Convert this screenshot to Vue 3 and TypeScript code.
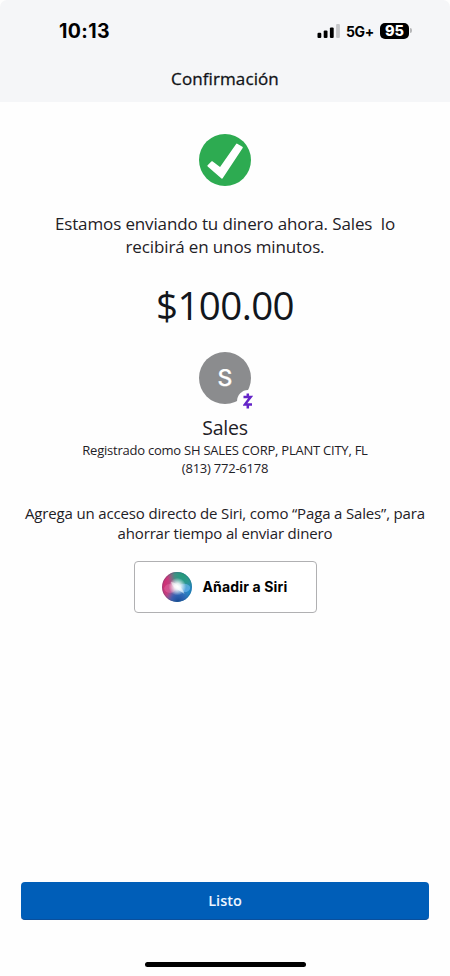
<script setup lang="ts">
interface Recipient {
  name: string
  initial: string
  registeredAs: string
  phone: string
}

const recipient: Recipient = {
  name: 'Sales',
  initial: 'S',
  registeredAs: 'Registrado como SH SALES CORP, PLANT CITY, FL',
  phone: '(813) 772-6178',
}
const amount = '$100.00'
const battery = 95
</script>

<template>
  <div class="screen">
    <header class="top">
      <div class="status">
        <span class="time">10:13</span>
        <div class="indicators">
          <svg class="signal" width="24" height="16" viewBox="0 0 24 16">
            <rect x="0.5" y="9.8" width="3.8" height="5.2" rx="1.1" />
            <rect x="6.7" y="7.4" width="3.8" height="7.6" rx="1.1" />
            <rect x="12.9" y="4.4" width="3.8" height="10.6" rx="1.1" />
            <rect x="19.1" y="1" width="3.8" height="14" rx="1.1" fill="#c6c7c9" />
          </svg>
          <span class="network">5G+</span>
          <span class="battery">{{ battery }}</span>
          <span class="battery-tip"></span>
        </div>
      </div>
      <h1 class="title">Confirmación</h1>
    </header>

    <main class="content">
      <svg class="check" width="52" height="52" viewBox="0 0 52 52">
        <circle cx="26" cy="26" r="26" fill="#2dab51" />
        <path d="M9.2 31.8 12.9 28 21.2 34.2 37.8 10.4 43 13.5 23 43.8Z" fill="#fff" stroke="#fff" stroke-width="1.6" stroke-linejoin="round" />
      </svg>

      <p class="message">
        <span class="line">Estamos enviando tu dinero ahora. Sales&nbsp; lo</span>
        <span class="line">recibirá en unos minutos.</span>
      </p>

      <div class="amount">{{ amount }}</div>

      <div class="avatar">
        <span class="initial">{{ recipient.initial }}</span>
        <span class="badge">
          <svg width="10" height="16" viewBox="0 0 10 16" fill="none" stroke="#6424c8" stroke-width="2.5">
            <path d="M.5 4H7.6L1.8 11.6H9" />
            <path d="M4.8 .4V4M4.8 11.8V15.6" />
          </svg>
        </span>
      </div>

      <div class="name">{{ recipient.name }}</div>
      <div class="detail">{{ recipient.registeredAs }}</div>
      <div class="detail">{{ recipient.phone }}</div>

      <p class="hint">
        <span class="line">Agrega un acceso directo de Siri, como “Paga a Sales”, para</span>
        <span class="line">ahorrar tiempo al enviar dinero</span>
      </p>

      <button class="siri" type="button">
        <svg width="30" height="30" viewBox="0 0 30 30">
          <defs>
            <linearGradient id="orb" x1="0" y1="0.4" x2="1" y2="0.6">
              <stop offset="0" stop-color="#d42a70" />
              <stop offset=".32" stop-color="#bd4888" />
              <stop offset=".58" stop-color="#4088c8" />
              <stop offset="1" stop-color="#1c85c4" />
            </linearGradient>
            <radialGradient id="green" cx=".7" cy=".08" r=".52">
              <stop offset="0" stop-color="#249a78" />
              <stop offset=".55" stop-color="#2a9d80" stop-opacity=".8" />
              <stop offset="1" stop-color="#2a9d80" stop-opacity="0" />
            </radialGradient>
            <radialGradient id="blue" cx=".54" cy=".98" r=".46">
              <stop offset="0" stop-color="#184a96" />
              <stop offset=".5" stop-color="#2c5cb0" stop-opacity=".8" />
              <stop offset="1" stop-color="#386bb0" stop-opacity="0" />
            </radialGradient>
            <radialGradient id="glow">
              <stop offset="0" stop-color="#fff" />
              <stop offset=".35" stop-color="#fff" stop-opacity=".85" />
              <stop offset="1" stop-color="#fff" stop-opacity="0" />
            </radialGradient>
          </defs>
          <circle cx="15" cy="15" r="15" fill="url(#orb)" />
          <circle cx="15" cy="15" r="15" fill="url(#green)" />
          <circle cx="15" cy="15" r="15" fill="url(#blue)" />
          <ellipse cx="22" cy="16" rx="6.2" ry="4.2" fill="#73bdf4" opacity=".6" />
          <ellipse cx="8" cy="16.5" rx="5.8" ry="4.4" fill="#e777ad" opacity=".4" />
          <circle cx="15.4" cy="14.6" r="8.8" fill="url(#glow)" />
          <path d="M9 10Q14 11 16 13.5Q21 16 22.5 22Q17 18 14 16.5Q10 14 9 10Z" fill="#fff" opacity=".5" />
          <circle cx="15" cy="15" r="14.5" fill="none" stroke="#2a647d" stroke-opacity=".3" />
        </svg>
        <span class="siri-label">Añadir a Siri</span>
      </button>
    </main>

    <footer class="bottom">
      <button class="done" type="button"><span>Listo</span></button>
      <div class="home"></div>
    </footer>
  </div>
</template>

<style>
body {
  background: #fff;
}
</style>

<style scoped>
.screen {
  display: flex;
  flex-direction: column;
  width: 450px;
  height: 976px;
  overflow: hidden;
  background: #fefefe;
  color: #1e2126;
  font-family: "Open Sans", sans-serif;
}
.top {
  height: 102px;
  flex: none;
  background: #f5f6f8;
  border-radius: 7px 7px 0 0;
}
.status {
  display: flex;
  justify-content: space-between;
  align-items: center;
  height: 61px;
  padding: 0 38px 0 59px;
  color: #000;
  font-family: Inter, sans-serif;
}
.time {
  padding-top: 1px;
  font-size: 19.5px;
  font-weight: 700;
  letter-spacing: .4px;
}
.indicators {
  display: flex;
  align-items: center;
}
.network {
  margin-left: 5px;
  padding-top: 1px;
  font-size: 14px;
  font-weight: 700;
  letter-spacing: -.3px;
}
.battery {
  width: 29px;
  height: 16px;
  margin-left: 6px;
  border-radius: 5px;
  background: #000;
  color: #fff;
  font-size: 14.5px;
  font-weight: 800;
  line-height: 16px;
  text-align: center;
}
.battery-tip {
  width: 2px;
  height: 5px;
  margin-left: 1px;
  border-radius: 0 2px 2px 0;
  background: #b5b6b8;
}
.title {
  margin: 0;
  height: 36px;
  color: #101216;
  font-size: 17px;
  font-weight: 500;
  line-height: 36px;
  text-align: center;
  letter-spacing: .1px;
  -webkit-text-stroke: .3px #101216;
}
.content {
  display: flex;
  flex: 1;
  flex-direction: column;
  align-items: center;
  padding-top: 32px;
  white-space: nowrap;
}
.check {
  flex: none;
}
.line {
  display: block;
}
.message {
  margin: 26px 0 0;
  font-size: 17px;
  line-height: 23px;
  text-align: center;
  letter-spacing: -.13px;
}
.amount {
  margin-top: 22px;
  height: 50px;
  color: #12161c;
  font-size: 38.5px;
  line-height: 50px;
  letter-spacing: -.6px;
}
.avatar {
  position: relative;
  display: flex;
  align-items: center;
  justify-content: center;
  flex: none;
  width: 52px;
  height: 52px;
  margin-top: 21.5px;
  border-radius: 50%;
  background: #8b8c8e;
}
.initial {
  color: #fff;
  font-family: Inter, sans-serif;
  font-size: 23px;
  font-weight: 500;
  -webkit-text-stroke: .2px #fff;
}
.badge {
  position: absolute;
  left: 38px;
  top: 38px;
  display: flex;
  align-items: center;
  justify-content: center;
  width: 22px;
  height: 23px;
  border-radius: 50%;
  background: #fefefe;
}
.name {
  margin-top: 10px;
  height: 27px;
  font-size: 19.5px;
  line-height: 28px;
  letter-spacing: -.25px;
}
.detail {
  height: 18.5px;
  font-size: 13px;
  line-height: 19px;
  letter-spacing: -.235px;
}
.hint {
  margin: 25px 0 0;
  font-size: 15px;
  line-height: 20px;
  text-align: center;
  letter-spacing: -.16px;
}
.siri {
  display: flex;
  align-items: center;
  box-sizing: border-box;
  flex: none;
  width: 183px;
  height: 52px;
  margin-top: 18px;
  padding: 0 0 0 27px;
  border: 1px solid #b0b0b2;
  border-radius: 4px;
  background: #fff;
}
.siri-label {
  margin-left: 11px;
  color: #000;
  font-family: Inter, sans-serif;
  font-size: 14px;
  font-weight: 700;
  letter-spacing: .15px;
}
.bottom {
  display: flex;
  flex-direction: column;
  align-items: center;
  flex: none;
  height: 94px;
}
.done {
  width: 408px;
  height: 38px;
  padding: 0;
  border: 0;
  border-bottom: 1px solid #0a4f9c;
  border-radius: 4px;
  background: #005eb8;
  color: #eef6ff;
  font-family: "Open Sans", sans-serif;
  font-size: 14.5px;
  font-weight: 600;
}
.home {
  width: 161px;
  height: 5px;
  margin-top: 42px;
  border-radius: 3px;
  background: #000;
}
</style>
